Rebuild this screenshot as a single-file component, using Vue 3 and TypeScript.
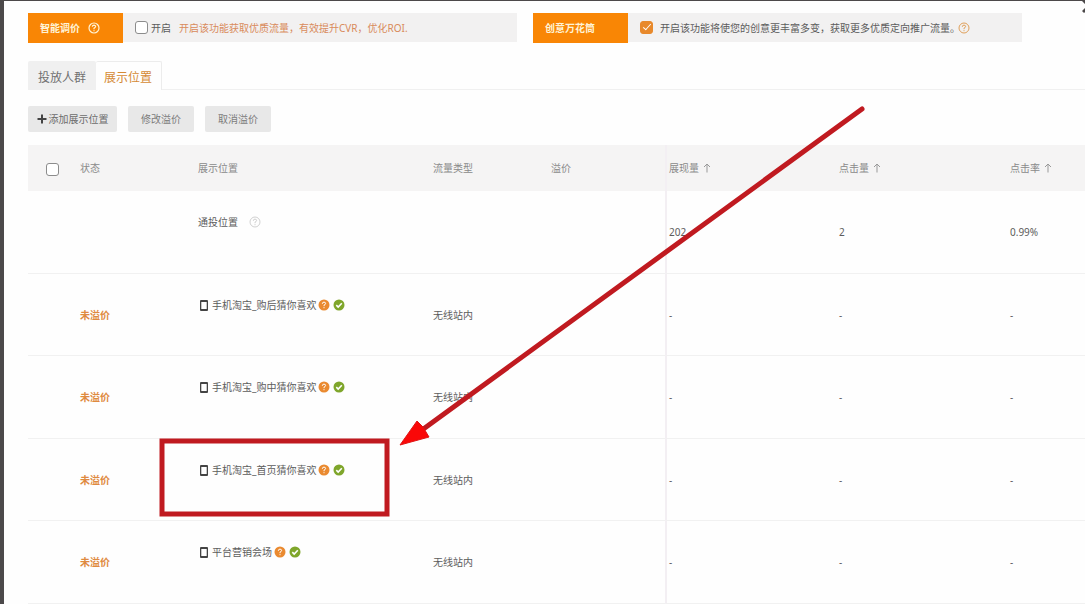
<script setup lang="ts">
import { ref } from 'vue'

interface Placement {
  name: string
  mobile: boolean
  status: string
  type: string
  stats: string[]
}

const smartPricing = ref(false)
const creativeGarden = ref(true)
const allSelected = ref(false)

const metrics: string[] = ['展现量', '点击量', '点击率']

const placements: Placement[] = [
  { name: '通投位置', mobile: false, status: '', type: '', stats: ['202', '2', '0.99%'] },
  { name: '手机淘宝_购后猜你喜欢', mobile: true, status: '未溢价', type: '无线站内', stats: ['-', '-', '-'] },
  { name: '手机淘宝_购中猜你喜欢', mobile: true, status: '未溢价', type: '无线站内', stats: ['-', '-', '-'] },
  { name: '手机淘宝_首页猜你喜欢', mobile: true, status: '未溢价', type: '无线站内', stats: ['-', '-', '-'] },
  { name: '平台营销会场', mobile: true, status: '未溢价', type: '无线站内', stats: ['-', '-', '-'] },
]
</script>

<template>
  <main class="page">
    <svg class="close" viewBox="0 0 14 14" aria-hidden="true">
      <path d="M1 1 L13 13 M13 1 L1 13" />
    </svg>

    <div class="features">
      <section class="feature">
        <h2 class="badge">
          智能调价
          <svg class="help" viewBox="0 0 12 12" aria-hidden="true">
            <circle cx="6" cy="6" r="5" />
            <path d="M4.3 4.8 Q4.4 3.1 6 3.1 Q7.7 3.2 7.6 4.7 Q7.4 5.6 6 6.2 V7.2 M6 8.2 V9.2" />
          </svg>
        </h2>
        <div class="feature-body">
          <label class="option">
            <input v-model="smartPricing" type="checkbox" class="tick" />
            <span>开启</span>
          </label>
          <span class="hint">开启该功能获取优质流量，有效提升CVR，优化ROI.</span>
        </div>
      </section>
      <section class="feature">
        <h2 class="badge">创意万花筒</h2>
        <div class="feature-body">
          <label class="option spaced">
            <input v-model="creativeGarden" type="checkbox" class="tick" />
            <span>开启该功能将使您的创意更丰富多变，获取更多优质定向推广流量。</span>
          </label>
          <svg class="help amber" viewBox="0 0 12 12" aria-hidden="true">
            <circle cx="6" cy="6" r="5" />
            <path d="M4.3 4.8 Q4.4 3.1 6 3.1 Q7.7 3.2 7.6 4.7 Q7.4 5.6 6 6.2 V7.2 M6 8.2 V9.2" />
          </svg>
        </div>
      </section>
    </div>

    <nav class="tabs">
      <a href="#crowd" class="tab">投放人群</a>
      <a href="#placement" class="tab active">展示位置</a>
    </nav>

    <div class="actions">
      <button type="button" class="add">
        <svg class="plus" viewBox="0 0 10 10" aria-hidden="true"><path d="M5 0.5 V9.5 M0.5 5 H9.5" /></svg>
        添加展示位置
      </button>
      <button type="button">修改溢价</button>
      <button type="button">取消溢价</button>
    </div>

    <table class="grid">
      <colgroup>
        <col class="c-check" />
        <col class="c-status" />
        <col class="c-name" />
        <col class="c-type" />
        <col class="c-price" />
        <col class="c-stat" />
        <col class="c-stat" />
        <col />
      </colgroup>
      <thead>
        <tr>
          <th class="check">
            <input v-model="allSelected" type="checkbox" class="tick" aria-label="全选" />
          </th>
          <th>状态</th>
          <th>展示位置</th>
          <th>流量类型</th>
          <th>溢价</th>
          <th v-for="(metric, i) in metrics" :key="metric" class="stat" :class="{ divider: i === 0 }">
            {{ metric }}
            <svg class="sort" viewBox="0 0 8 10" aria-hidden="true">
              <path d="M4 9.5 V1 M1 4 L4 1 L7 4" />
            </svg>
          </th>
        </tr>
      </thead>
      <tbody>
        <tr v-for="item in placements" :key="item.name">
          <td></td>
          <td class="status">{{ item.status }}</td>
          <td class="name">
            <div class="name-line">
              <svg v-if="item.mobile" class="phone" viewBox="0 0 8 11" aria-hidden="true">
                <rect class="shell" x="0" y="0" width="8" height="11" rx="1" />
                <rect class="screen" x="1.3" y="2" width="5.4" height="7" />
              </svg>
              <span>{{ item.name }}</span>
              <template v-if="item.mobile">
                <svg class="mark first" viewBox="0 0 12 12" aria-hidden="true">
                  <circle class="orange" cx="6" cy="6" r="5.5" />
                  <path class="sign" d="M4.3 4.8 Q4.4 3.1 6 3.1 Q7.7 3.2 7.6 4.7 Q7.4 5.6 6 6.2 V7.2 M6 8.2 V9.2" />
                </svg>
                <svg class="mark" viewBox="0 0 12 12" aria-hidden="true">
                  <circle class="green" cx="6" cy="6" r="5.5" />
                  <path class="sign bold" d="M3.3 6.1 L5.2 8 L8.8 4.3" />
                </svg>
              </template>
              <svg v-else class="help muted" viewBox="0 0 12 12" aria-hidden="true">
                <circle cx="6" cy="6" r="5" />
                <path d="M4.3 4.8 Q4.4 3.1 6 3.1 Q7.7 3.2 7.6 4.7 Q7.4 5.6 6 6.2 V7.2 M6 8.2 V9.2" />
              </svg>
            </div>
          </td>
          <td>{{ item.type }}</td>
          <td></td>
          <td v-for="(stat, i) in item.stats" :key="i" class="stat" :class="{ divider: i === 0 }">{{ stat }}</td>
        </tr>
      </tbody>
    </table>

    <svg class="annotation" width="720" height="430" viewBox="150 100 720 430" aria-hidden="true">
      <rect class="frame" x="162" y="441" width="225" height="73" />
      <path class="shaft" d="M862 109 L422 430" />
      <path class="head" d="M400 445 L417 421 L423 427 L429 437 Z" />
    </svg>
  </main>
</template>

<style>
body {
  margin: 0;
  background: #fefefe;
}
</style>

<style scoped>
.page {
  position: relative;
  box-sizing: border-box;
  height: 100vh;
  overflow: hidden;
  padding: 12px 0 0 24px;
  border-top: 1px solid #4c494a;
  border-left: 4px solid #4c494a;
  background: #fefefe;
  color: #5c5c5c;
  font-family: "Noto Sans", "Noto Sans CJK SC", sans-serif;
  font-size: 10px;
  line-height: 16px;
}

.close {
  position: absolute;
  top: -2px;
  right: -11px;
  width: 14px;
  height: 14px;
  fill: none;
  stroke: #4c494a;
  stroke-width: 3;
}

.features {
  display: flex;
  gap: 16px;
  padding-right: 63px;
}

.feature {
  display: flex;
  flex: 1;
  height: 30px;
}

.badge {
  display: flex;
  align-items: center;
  gap: 8px;
  box-sizing: border-box;
  width: 95px;
  margin: 0;
  padding-left: 12px;
  background: #f98605;
  color: #fff3d6;
  font-size: 10px;
  font-weight: 700;
}

.feature-body {
  display: flex;
  flex: 1;
  align-items: center;
  gap: 8px;
  height: 29px;
  padding-left: 12px;
  background: #f2f1f1;
  white-space: nowrap;
}

.feature-body .amber {
  margin-left: -10px;
}

.option {
  display: flex;
  align-items: center;
  gap: 3px;
}

.option.spaced {
  gap: 7px;
}

.hint {
  color: #d98b5c;
}

.tick {
  display: block;
  box-sizing: border-box;
  appearance: none;
  width: 13px;
  height: 13px;
  margin: 0;
  border: 1px solid #8c8c8c;
  border-radius: 3px;
  background: #fff;
}

.tick:checked {
  border-color: #e8892b;
  background: #e8892b;
}

.tick:checked::after {
  content: "";
  display: block;
  box-sizing: border-box;
  width: 4px;
  height: 8px;
  margin: 0 auto;
  border: solid #fff;
  border-width: 0 1px 1px 0;
  transform: rotate(42deg);
}

.help {
  flex: none;
  width: 12px;
  height: 12px;
  fill: none;
  stroke: #fff3d6;
  stroke-width: 1.2;
}

.help.amber {
  stroke: #e0a05a;
  stroke-width: 1;
}

.help.muted {
  margin-left: 11px;
  stroke: #c4c4c4;
  stroke-width: 0.8;
}

.tabs {
  display: flex;
  height: 28px;
  margin-top: 18px;
  border-bottom: 1px solid #f0f0f0;
}

.tab {
  box-sizing: border-box;
  height: 29px;
  padding: 0 10px;
  border-radius: 2px 2px 0 0;
  background: #f0f0f0;
  color: #707070;
  font-size: 12px;
  line-height: 34px;
  text-decoration: none;
}

.tab.active {
  padding: 0 9px 0 8px;
  border: solid #ececec;
  border-width: 1px 1px 0 0;
  background: #fefefe;
  color: #d58a35;
  line-height: 32px;
}

.actions {
  display: flex;
  gap: 11px;
  margin-top: 16px;
}

.actions button {
  display: flex;
  align-items: center;
  justify-content: center;
  gap: 2px;
  width: 66px;
  height: 26px;
  padding: 0;
  border: 0;
  border-radius: 2px;
  background: #e8e8e8;
  color: #7c7c7c;
  font: inherit;
}

.actions .add {
  width: 89px;
  color: #6c6c6c;
}

.plus {
  width: 10px;
  height: 10px;
  fill: none;
  stroke: #444;
  stroke-width: 2;
}

.grid {
  width: 100%;
  margin-top: 13px;
  border-collapse: separate;
  border-spacing: 0;
  table-layout: fixed;
}

.c-check {
  width: 52px;
}

.c-status {
  width: 118px;
}

.c-name {
  width: 235px;
}

.c-type {
  width: 118px;
}

.c-price {
  width: 114px;
}

.c-stat {
  width: 171px;
}

th,
td {
  box-sizing: border-box;
  padding: 0;
  text-align: left;
  white-space: nowrap;
}

th {
  height: 46px;
  background: #f5f4f4;
  color: #8a8a8a;
  font-weight: 400;
}

td {
  height: 82px;
  border-bottom: 1px solid #f1f1f1;
}

tbody tr:nth-child(odd) td {
  height: 83px;
}

th.check {
  padding: 2px 0 0 18px;
}

.stat {
  padding-left: 3px;
}

.stat.divider {
  padding-left: 2px;
  border-left: 2px solid #f3eff3;
}

.status {
  color: #df8a40;
  font-weight: 700;
}

.name {
  padding-top: 23px;
  vertical-align: top;
}

.name-line {
  display: flex;
  align-items: center;
}

.phone {
  width: 8px;
  height: 11px;
  margin: 0 4px 0 2px;
}

.shell {
  fill: #444;
}

.screen {
  fill: #fefefe;
}

.mark {
  width: 12px;
  height: 12px;
  margin-left: 3px;
}

.mark.first {
  margin-left: 2px;
}

.orange {
  fill: #ea8a30;
}

.green {
  fill: #7fa62b;
}

.sign {
  fill: none;
  stroke: #fff;
  stroke-width: 1;
}

.sign.bold {
  stroke-width: 1.6;
}

.sort {
  width: 8px;
  height: 10px;
  margin-left: 1px;
  vertical-align: -1px;
  fill: none;
  stroke: #999;
  stroke-width: 1;
}

.annotation {
  position: absolute;
  top: 99px;
  left: 146px;
  pointer-events: none;
}

.frame {
  fill: none;
  stroke: #c01a20;
  stroke-width: 5;
}

.shaft {
  fill: none;
  stroke: #c01a20;
  stroke-width: 5;
  stroke-linecap: round;
}

.head {
  fill: #fa0808;
  stroke: #e01414;
  stroke-width: 1;
}
</style>
